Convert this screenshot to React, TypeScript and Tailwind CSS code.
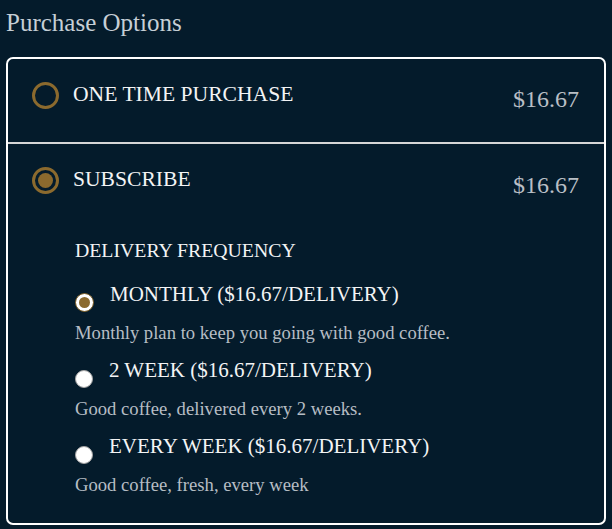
const options = [
    {
        id: 'monthly',
        label: 'MONTHLY ($16.67/DELIVERY)',
        description: 'Monthly plan to keep you going with good coffee.',
        selected: true,
    },
    {
        id: 'two-week',
        label: '2 WEEK ($16.67/DELIVERY)',
        description: 'Good coffee, delivered every 2 weeks.',
        selected: false,
    },
    {
        id: 'weekly',
        label: 'EVERY WEEK ($16.67/DELIVERY)',
        description: 'Good coffee, fresh, every week',
        selected: false,
    },
];

const BigRadio = ({ checked }: { checked: boolean }) => (
    <div className="w-[27px] h-[27px] shrink-0 rounded-full border-[3px] border-[#8b6a2e] flex items-center justify-center">
        {checked && <div className="w-[15px] h-[15px] rounded-full bg-[#8b6a2e]" />}
    </div>
);

const SmallRadio = ({ checked }: { checked: boolean }) =>
    checked ? (
        <div className="mt-[12px] w-[19px] h-[19px] shrink-0 rounded-full bg-white border border-[#7a5c25] flex items-center justify-center">
            <div className="w-[11px] h-[11px] rounded-full bg-[#8b6a2e]" />
        </div>
    ) : (
        <div className="mt-[13px] w-[18px] h-[18px] shrink-0 rounded-full bg-white border border-[#a3a3a3]" />
    );

export default function App() {
    return (
        <div className="w-[612px] h-[529px] bg-[#041b2b] px-[6px] pt-[8px] [font-family:'Liberation_Serif',serif]">
            <h2 className="text-[25px] leading-[30px] text-[#c6cfd6]">Purchase Options</h2>

            <div className="mt-[19px] border-2 border-white rounded-[7px]">
                {/* One time purchase */}
                <div className="h-[83px] flex items-start pl-[24px] pr-[25px]">
                    <div className="mt-[23px]">
                        <BigRadio checked={false} />
                    </div>
                    <span className="mt-[22px] ml-[14px] text-[21.6px] leading-[27px] text-[#f3f4f5]">ONE TIME PURCHASE</span>
                    <span className="mt-[27px] ml-auto text-[24px] leading-[27px] text-[#b9bfc5]">$16.67</span>
                </div>

                <div className="h-[2px] bg-[#d6d6d6]" />

                {/* Subscribe */}
                <div className="pb-[26px]">
                    <div className="flex items-start pl-[24px] pr-[25px]">
                        <div className="mt-[23px]">
                            <BigRadio checked />
                        </div>
                        <span className="mt-[22px] ml-[14px] text-[21.6px] leading-[27px] text-[#f3f4f5]">SUBSCRIBE</span>
                        <span className="mt-[28px] ml-auto text-[24px] leading-[27px] text-[#b9bfc5]">$16.67</span>
                    </div>

                    <div className="mt-[39px] pl-[67px]">
                        <h3 className="text-[19.8px] leading-[24px] text-[#f3f4f5]">DELIVERY FREQUENCY</h3>

                        <div className="mt-[19px] flex flex-col gap-[12px]">
                            {options.map((opt) => (
                                <div key={opt.id}>
                                    <div className="flex items-start h-[27px]">
                                        <SmallRadio checked={opt.selected} />
                                        <span className="ml-[16px] text-[21px] leading-[27px] text-[#f3f4f5]">{opt.label}</span>
                                    </div>
                                    <p className="mt-[13px] text-[18.65px] leading-[24px] text-[#b6bdc4]">{opt.description}</p>
                                </div>
                            ))}
                        </div>
                    </div>
                </div>
            </div>
        </div>
    );
}
